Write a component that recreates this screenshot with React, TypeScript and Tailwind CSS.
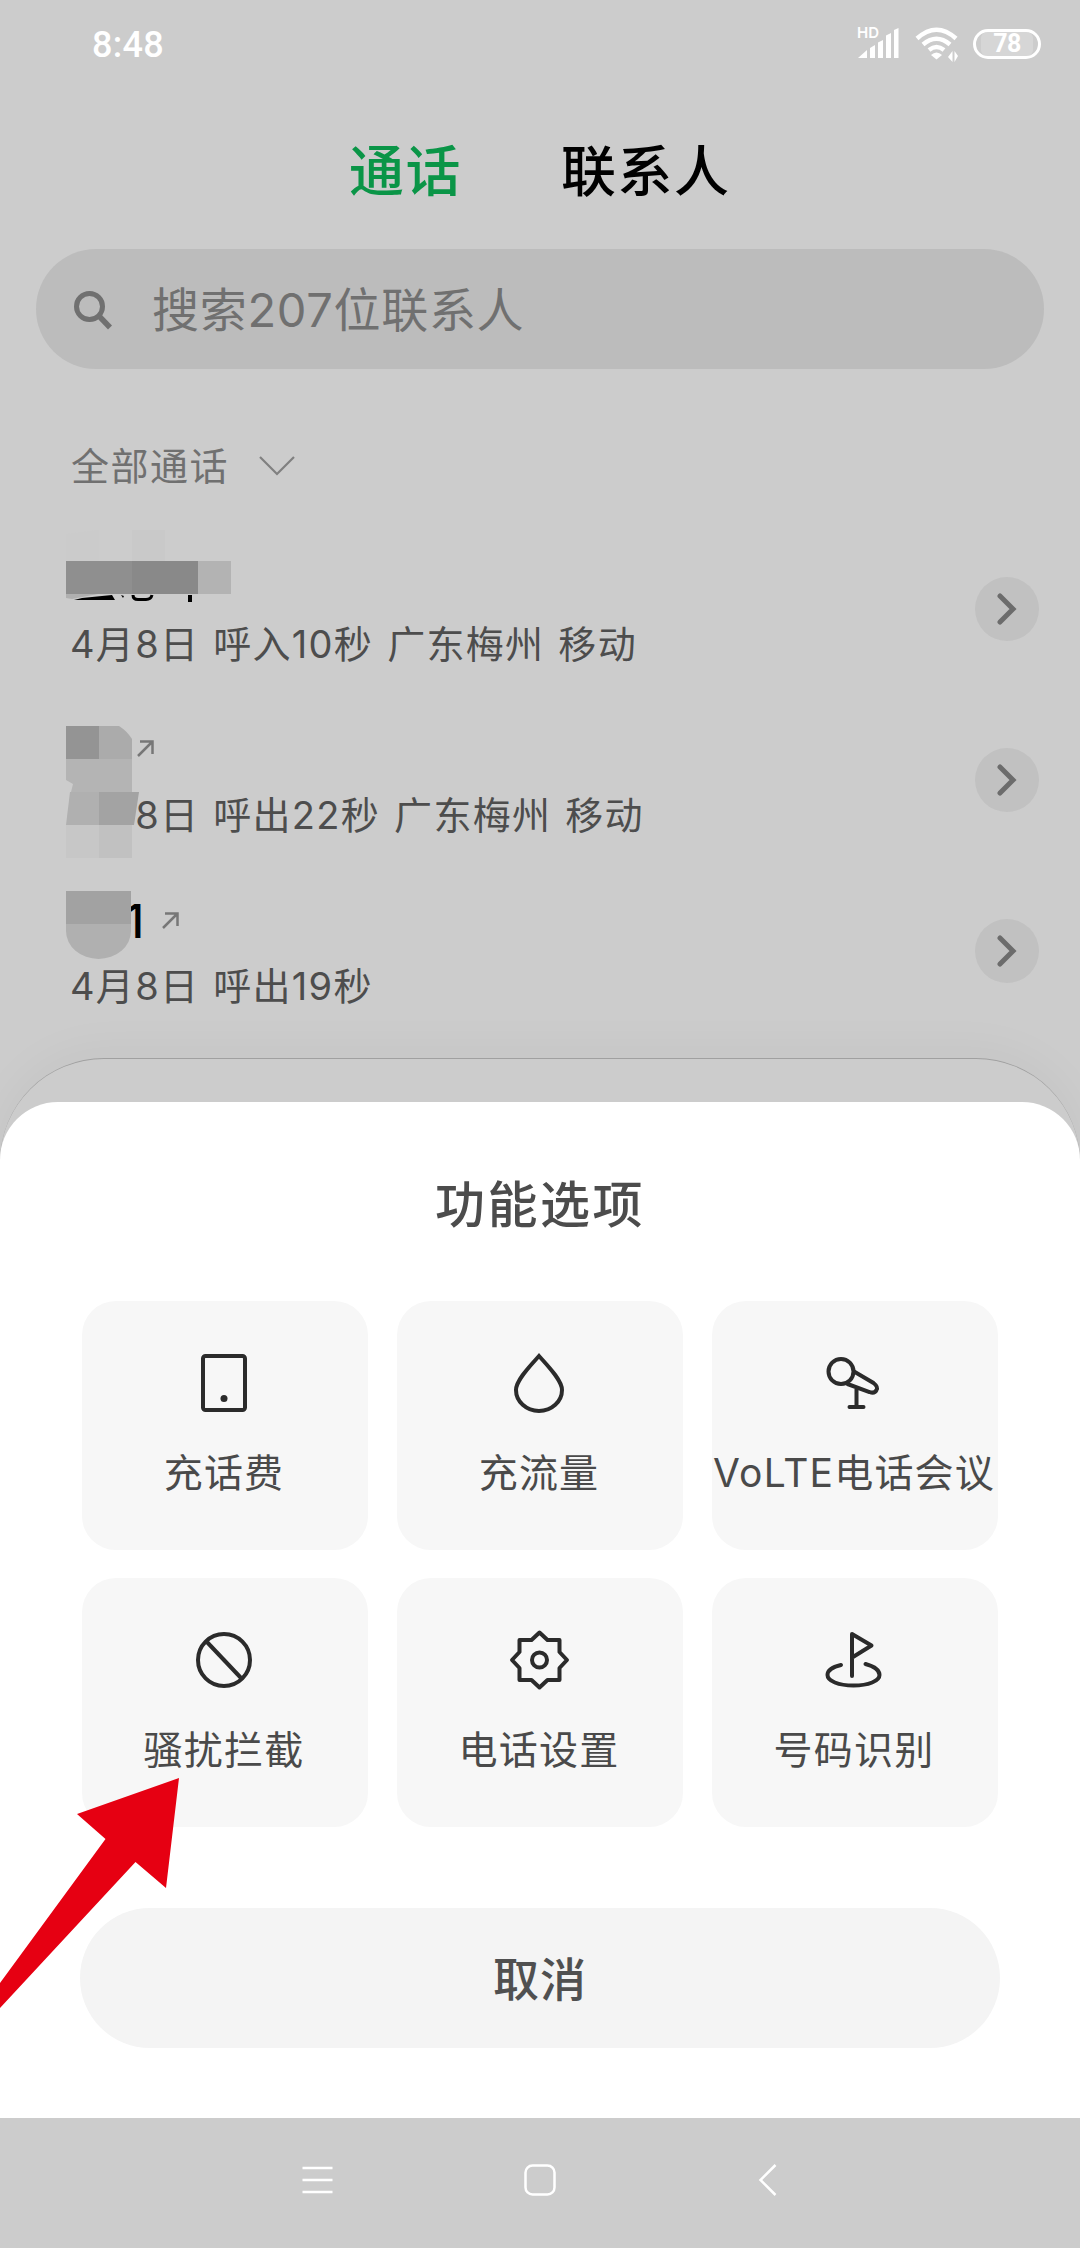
import type { ReactNode } from "react";

const FONT = "font-[Inter,'Noto_Sans_CJK_SC',sans-serif]";

function StatusBar() {
  return (
    <header className="flex h-[90px] shrink-0 items-start justify-between pl-[92px] pr-[39px] text-white">
      <span className="mt-[23px] font-[Roboto,sans-serif] text-[36px] leading-[44px] font-medium tracking-[0.300px]">8:48</span>
      <div className="mt-[20px] flex items-start">
        <svg width="44" height="40" viewBox="0 -6 44 40" fill="#fff">
          <text x="0" y="12" fontSize="15" fontWeight="600" fontFamily="Inter, sans-serif">HD</text>
          <path d="M1 32L10 24V32ZM13 22L18 19V32H13ZM21 16.5L26 14V32H21ZM29 9.5L34 7V32H29ZM37 4L41.500 2V32H37Z" />
        </svg>
        <svg className="mt-[6px] ml-[14px]" width="44" height="37" viewBox="0 0 44 37" fill="none" stroke="#fff">
          <path d="M2 12.500Q21.500 -5 41 12.500M8 18.500Q21.500 7 35 18.500" strokeWidth="4.500" />
          <path d="M14 24Q21.500 18 29 24" strokeWidth="4.500" />
          <path d="M16 29Q21.500 24 27 29L21.500 33.500Z" fill="#fff" stroke="none" />
          <path d="M37.500 25V36L33 31ZM39.500 36V25L43 30Z" fill="#fff" stroke="none" />
        </svg>
        <div className="ml-[14px] mt-[9px] flex h-[30px] w-[68px] items-center justify-center rounded-full border-3 border-white">
          <span className="rounded-md bg-white/20 px-3 font-[Roboto,sans-serif] text-[25px] leading-[24px] font-bold tracking-[-0.500px]">78</span>
        </div>
      </div>
    </header>
  );
}

function OutgoingIcon({ className }: { className?: string }) {
  return (
    <svg className={className} width="18" height="18" viewBox="0 0 18 18" fill="none" stroke="#777" strokeWidth="2.500">
      <path d="M1 17L15.500 2.500M3 2.500H15.500V15" />
    </svg>
  );
}

type CallRow = { detail: string; name: ReactNode };

/* Pixelated patches that hide the caller's name */
const calls: CallRow[] = [
  {
    detail: "4月8日 呼入10秒 广东梅州 移动",
    name: (
      <svg className="absolute left-[66px] top-[7px]" width="170" height="80" viewBox="0 0 170 80">
        <path fill="#cbcbcb" d="M0 4L33 0V31H0Z" />
        <path fill="#c9c9c9" d="M66 0H99V31H66Z" />
        <path fill="#8f8f8f" d="M0 31H66V64H0Z" />
        <path fill="#898989" d="M66 31H132V64H66Z" />
        <path fill="#b3b3b3" d="M132 31H165V64H132Z" />
        <path fill="#b0b0b0" d="M0 64H32L6 69L0 68Z" />
        <path d="M8 70L16 68L46 65L49 70ZM55 65L58 66L57 68ZM122 65H126V72H122Z" />
        <path d="M67 65Q67 69.500 72 69.500H80Q85 69.500 86 65" fill="none" stroke="#000" strokeWidth="3" />
      </svg>
    ),
  },
  {
    detail: "4月8日 呼出22秒 广东梅州 移动",
    name: (
      <>
        <svg className="absolute left-[66px] top-[32px]" width="76" height="134" viewBox="0 0 76 134">
          <path fill="#949494" d="M0 0H33V34H0Z" />
          <path fill="#ababab" d="M33 0H53Q61 5 66 13V34H33Z" />
          <path fill="#b4b4b4" d="M0 33H66V66H5L7 58L0 54Z" />
          <path fill="#b0b0b0" d="M4 66H33V99H0Z" />
          <path fill="#a3a3a3" d="M33 66H73L68 99H33Z" />
          <path fill="#c7c7c7" d="M0 99H33V132H0Z" />
          <path fill="#c1c1c1" d="M33 99H66V132H33Z" />
        </svg>
        <OutgoingIcon className="absolute left-[137px] top-[45px]" />
      </>
    ),
  },
  {
    detail: "4月8日 呼出19秒",
    name: (
      <>
        <span className="absolute left-[125px] top-[28px] text-[46px] leading-[56px] font-medium text-black">1</span>
        <svg className="absolute left-[66px] top-[26px]" width="65" height="70" viewBox="0 0 65 70">
          <path fill="#a2a2a2" d="M0 0H65V34H0Z" />
          <path fill="#b0b0b0" d="M0 33H65V40A32.500 28 0 0 1 0 40Z" />
        </svg>
        <OutgoingIcon className="absolute left-[162px] top-[46px]" />
      </>
    ),
  },
];

function CallList() {
  return (
    <ul className="mt-[32px]">
      {calls.map((call) => (
        <li key={call.detail} className="relative flex h-[171px] items-center justify-between pr-[41px]">
          <p className="mt-[71px] pl-[70px] text-[38px] leading-[48px] tracking-[1.300px] whitespace-pre text-[#4d4d4d] [word-spacing:2px]">
            {call.detail}
          </p>
          {call.name}
          <button className="flex size-16 items-center justify-center rounded-full bg-[#c1c1c1]">
            <svg width="20" height="32" viewBox="0 0 20 32" fill="none" stroke="#6c6c6c" strokeWidth="5">
              <path d="M3 3L16 16L3 29" strokeLinecap="round" />
            </svg>
          </button>
        </li>
      ))}
    </ul>
  );
}

const actions: { label: string; icon: ReactNode }[] = [
  {
    label: "充话费",
    icon: (
      <>
        <rect x="10" y="4" width="42" height="54" rx="2.500" />
        <circle cx="31" cy="46.500" r="3.500" fill="#2b2b2b" stroke="none" />
      </>
    ),
  },
  {
    label: "充流量",
    icon: <path d="M31 4C23 13 8 28 8 38A23 21 0 0 0 54 38C54 28 39 13 31 4Z" />,
  },
  {
    label: "VoLTE电话会议",
    icon: (
      <>
        <circle cx="18" cy="19.500" r="12.500" />
        <path d="M31 19.500L50.500 31Q55.500 35 53.500 38Q51.500 42 46.500 40L24.500 32M33.500 36V55M26.500 55H40.500" strokeLinecap="round" />
      </>
    ),
  },
  {
    label: "骚扰拦截",
    icon: (
      <>
        <circle cx="31" cy="31" r="26" />
        <path d="M13 12L49 50" />
      </>
    ),
  },
  {
    label: "电话设置",
    icon: (
      <>
        <path
          strokeLinejoin="round"
          d="M31.500 3.500L39.500 11H51.500V23L59 31L51.500 39V51H39.500L31.500 58.500L23.500 51H11.500V39L4 31L11.500 23V11H23.500Z"
        />
        <circle cx="31.500" cy="31" r="7.500" />
      </>
    ),
  },
  {
    label: "号码识别",
    icon: (
      <path
        strokeLinecap="round"
        strokeLinejoin="round"
        d="M29 47V5L48.500 16.500L30 28M18 36C9.500 38 4.500 41.500 4.500 46C4.500 52 15.500 56.500 30.500 56.500C45.500 56.500 56.500 52 56.500 46C56.500 41.500 51.500 37.500 42.500 35"
      />
    ),
  },
];

function ActionSheet() {
  return (
    <section className="absolute inset-x-0 top-[1102px] flex h-[1016px] flex-col items-center rounded-t-[58px] bg-white">
      <h2 className="mt-[71px] text-[50px] leading-[64px] font-medium tracking-[2.500px] text-[#4c4c4c]">功能选项</h2>
      <div className="mt-[64px] grid w-[916px] grid-cols-3 gap-x-[29px] gap-y-[28px]">
        {actions.map(({ label, icon }) => (
          <button key={label} className="flex h-[249px] flex-col items-center rounded-[34px] bg-[#f7f7f7] pt-[51px]">
            <svg width="64" height="64" viewBox="0 0 64 64" fill="none" stroke="#2b2b2b" strokeWidth="4">
              {icon}
            </svg>
            <span className="mt-[33px] mr-[2px] text-[39px] leading-[48px] tracking-[1.200px] whitespace-nowrap text-[#4a4a4a]">
              {label}
            </span>
          </button>
        ))}
      </div>
      <button className="mt-[81px] h-[140px] w-[920px] rounded-full bg-[#f4f4f4] pt-[2px] text-[46px] font-medium tracking-[1px] text-[#505050]">
        取消
      </button>
    </section>
  );
}

function NavBar() {
  return (
    <nav className="absolute inset-x-0 bottom-0 flex h-[130px] items-center bg-[#ccc] pl-[300px] pb-[6px]">
      <svg width="36" height="36" viewBox="0 0 36 36" stroke="#fff" strokeWidth="2.500">
        <path d="M2.500 6H32.500M2.500 18H32.500M2.500 30H32.500" />
      </svg>
      <svg className="ml-[186px]" width="36" height="36" viewBox="0 0 36 36" fill="none" stroke="#fff" strokeWidth="2.500">
        <rect x="3.500" y="3.500" width="29" height="29" rx="7" />
      </svg>
      <svg className="ml-[199px]" width="20" height="36" viewBox="0 0 20 36" fill="none" stroke="#fff" strokeWidth="2.500">
        <path d="M18.500 3L3.500 18L18.500 33" />
      </svg>
    </nav>
  );
}

export default function App() {
  return (
    <div className={`relative flex h-[2248px] w-[1080px] flex-col overflow-hidden bg-[#ccc] ${FONT}`}>
      <StatusBar />

      <div className="mt-[45px] flex h-[72px] shrink-0 items-center pl-[349px] text-[55px] font-medium tracking-[1.500px]">
        <span className="text-[#0a9547]">通话</span>
        <span className="ml-[99px] text-black">联系人</span>
      </div>

      <div className="mx-9 mt-[42px] flex h-[120px] shrink-0 items-center rounded-full bg-[#bcbcbc] pl-[37px] text-[#707070]">
        <svg className="mt-[2px]" width="40" height="40" viewBox="0 0 40 40" fill="none" stroke="currentColor" strokeWidth="5">
          <circle cx="16.500" cy="16.500" r="13" />
          <path d="M25.500 25.500L37 37.500" strokeWidth="5.500" />
        </svg>
        <span className="ml-[39px] pt-[3px] text-[47px] tracking-[0.700px]">搜索207位联系人</span>
      </div>

      <div className="mt-[72px] flex h-[50px] shrink-0 items-center pl-[71px] text-[38px] tracking-[1.500px] text-[#707070]">
        全部通话
        <svg className="ml-[29px]" width="38" height="22" viewBox="0 0 38 22" fill="none" stroke="#808080" strokeWidth="2.200">
          <path d="M2 2L19 19L36 2" />
        </svg>
      </div>

      <CallList />

      {/* Top edge of the dial pad, behind the sheet */}
      <div className="absolute inset-x-0 top-[1058px] h-[300px] rounded-t-[104px] border-t border-[#a0a0a0] bg-[#ccc] shadow-[0_-6px_50px_rgba(0,0,0,0.04)]" />

      <ActionSheet />
      <NavBar />

      {/* Pointer at the blocking entry */}
      <svg className="absolute left-0 top-[1770px]" width="190" height="245" viewBox="0 0 190 245" fill="#e60012">
        <path d="M179 8L77 44L105.500 69L0 213V238L135.500 92L166 118Z" />
      </svg>
    </div>
  );
}
